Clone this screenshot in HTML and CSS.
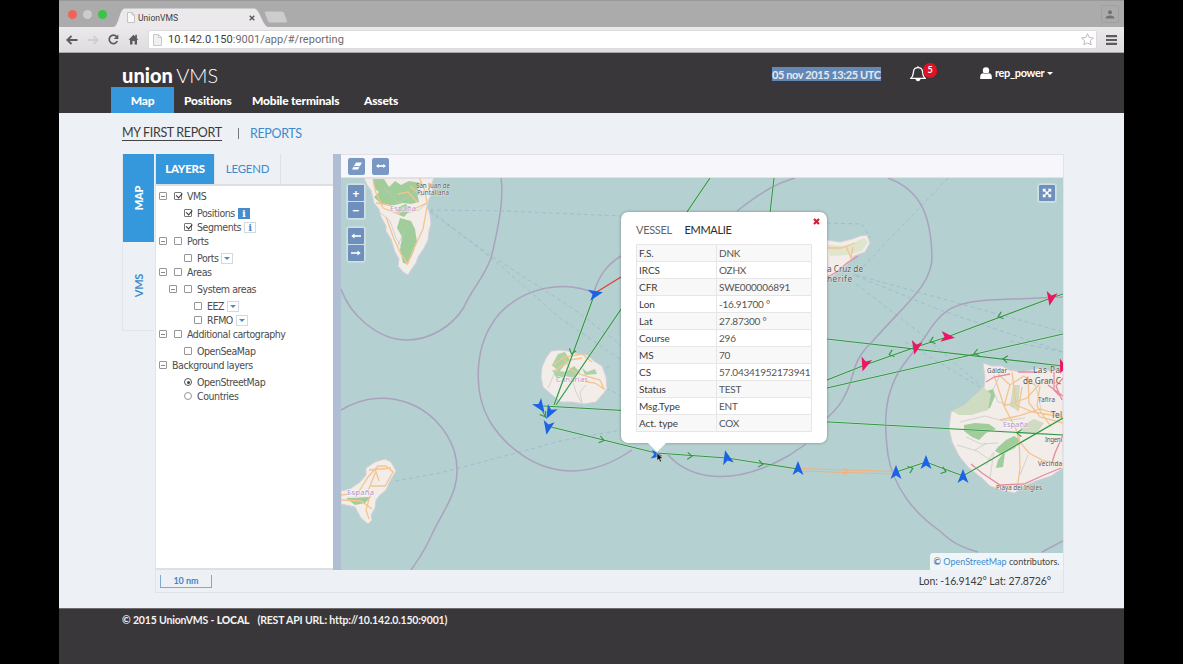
FILE: index.html
```html
<!DOCTYPE html>
<html lang="en">
<head>
<meta charset="utf-8">
<title>UnionVMS</title>
<link rel="stylesheet" href="styles.css">
</head>
<body>
<div class="window">
  <div class="tabstrip">
    <div class="lights"><i class="red"></i><i class="grey"></i><i class="green"></i></div>
    <div class="tab">
      <svg class="tab-shape" width="154" height="19" viewBox="0 0 154 19"><path d="M0 19 C5 17 5 3 10 .5 H140 C146 1 148 17 154 19Z" fill="#ebe9eb"/></svg>
      <svg class="page-icon" width="8" height="11" viewBox="0 0 8 11"><path d="M.5.5h4.5l2.500 2.500v7.500h-7z M5 .5v2.500h2.500" fill="#f8f8f8" stroke="#c4c4c4"/></svg>
      <span class="tab-title">UnionVMS</span>
      <svg class="tab-close" width="6" height="6" viewBox="0 0 6 6"><path d="M.7.7l4.600 4.600M5.300.7L.7 5.300" stroke="#555" stroke-width="1.300"/></svg>
    </div>
    <svg class="newtab" width="24" height="12" viewBox="0 0 24 12"><path d="M1.500.5h16.500q1.500 0 2 1.500l3 8q.3 1.500-1 1.500H6q-1.500 0-2-1.500L.8 2Q.5.500 1.500.500z" fill="#cdcdcd" stroke="#bbb" stroke-width=".6"/></svg>
    <div class="profile"><svg width="10" height="9" viewBox="0 0 10 9"><circle cx="5" cy="2.300" r="2" fill="#727272"/><path d="M.5 8.500Q.800 5.800 5 5.600 9.200 5.800 9.500 8.500z" fill="#727272"/></svg></div>
  </div>
  <div class="toolbar">
    <svg width="12" height="10" viewBox="0 0 12 10"><path d="M11.500 5H1.500M5.500 1L1.300 5l4.200 4" fill="none" stroke="#5c5c5c" stroke-width="1.800"/></svg>
    <svg width="12" height="10" viewBox="0 0 12 10"><path d="M.5 5h10M6.500 1l4.200 4-4.200 4" fill="none" stroke="#cfcfcf" stroke-width="1.800"/></svg>
    <svg width="11" height="11" viewBox="0 0 11 11"><path d="M9.300 7A4.200 4.200 0 1 1 8.600 2.600" fill="none" stroke="#5c5c5c" stroke-width="1.700"/><path d="M10.300.5v4.500H5.800z" fill="#5c5c5c"/></svg>
    <svg width="11" height="11" viewBox="0 0 11 11"><path d="M.5 5.800L5.500.800l1.800 1.800V.8h1.600v3.400l1.600 1.600H9V10.500H6.600V7H4.500v3.500H2V5.800z" fill="#5c5c5c"/></svg>
    <div class="address">
      <svg width="9" height="12" viewBox="0 0 9 12"><path d="M.5.5h5l3 3v8h-8z M5.500.5v3h3" fill="#f1f1f1" stroke="#c9c9c9"/></svg>
      <span class="url"><b>10.142.0.150</b>:9001/app/#/reporting</span>
      <svg class="star" width="13" height="13" viewBox="0 0 14 14"><path d="M7 .8l1.900 4 4.400.600-3.200 3 .8 4.400L7 10.700l-3.900 2.100.8-4.400-3.200-3 4.400-.6z" fill="#fff" stroke="#b3b3b3"/></svg>
    </div>
    <svg class="burger" width="11" height="10" viewBox="0 0 11 10"><path d="M0 1.200h11M0 5h11M0 8.800h11" stroke="#5c5c5c" stroke-width="2.200"/></svg>
  </div>

  <header class="header">
    <div class="topline">
      <div class="brand"><b>union</b> <span>VMS</span></div>
      <div class="clock"><span>05 nov 2015 13:25 UTC</span></div>
      <div class="alerts">
        <svg width="16" height="17" viewBox="0 0 16 17"><path d="M1 13.300C3.500 11 3.200 8.500 3.500 6.500 3.800 4 5.500 2.600 8 2.600S12.200 4 12.500 6.500c.300 2 0 4.500 2.500 6.800z" fill="none" stroke="#fff" stroke-width="1.300"/><path d="M8 2.600V1M6 14a2 1.800 0 0 0 4 0z" fill="#fff" stroke="#fff"/></svg>
        <span class="count">5</span>
      </div>
      <div class="user">
        <svg width="12" height="12" viewBox="0 0 12 12"><circle cx="6" cy="3.400" r="3.200" fill="#fff"/><path d="M.2 12V9.500Q.4 6.300 3.300 6.200 6 8 8.700 6.200 11.600 6.300 11.800 9.500V12z" fill="#fff"/></svg>
        <span>rep_power</span><i class="caret"></i>
      </div>
    </div>
    <nav class="nav"><a class="active">Map</a><a class="n2">Positions</a><a class="n3">Mobile terminals</a><a class="n4">Assets</a></nav>
  </header>

  <main class="content">
    <div class="crumbs"><a class="current">MY FIRST REPORT</a><i></i><a class="reports">REPORTS</a></div>
    <div class="workspace">
      <div class="side-tabs"><div class="side active"><span>MAP</span></div><div class="side"><span>VMS</span></div></div>
      <div class="frame">
        <div class="panes">
          <aside class="layers">
            <div class="layer-tabs"><a class="active">LAYERS</a><a>LEGEND</a></div>
            <div class="tree">
              <ul>
                <li><div class="row"><i class="exp"></i><i class="box on"></i>VMS</div>
                  <ul><li><div class="row"><i class="box on"></i>Positions<em class="info sel"></em></div></li>
                      <li><div class="row"><i class="box on"></i>Segments<em class="info"></em></div></li></ul></li>
                <li><div class="row"><i class="exp"></i><i class="box"></i>Ports</div>
                  <ul><li><div class="row"><i class="box"></i>Ports<em class="drop"></em></div></li></ul></li>
                <li><div class="row"><i class="exp"></i><i class="box"></i>Areas</div>
                  <ul><li class="branch"><div class="row"><i class="exp"></i><i class="box"></i>System areas</div>
                    <ul><li><div class="row"><i class="box"></i>EEZ<em class="drop"></em></div></li>
                        <li><div class="row"><i class="box"></i>RFMO<em class="drop"></em></div></li></ul></li></ul></li>
                <li><div class="row"><i class="exp"></i><i class="box"></i>Additional cartography</div>
                  <ul><li><div class="row"><i class="box"></i>OpenSeaMap</div></li></ul></li>
                <li><div class="row"><i class="exp"></i>Background layers</div>
                  <ul><li><div class="row"><i class="radio on"></i>OpenStreetMap</div></li>
                      <li><div class="row"><i class="radio"></i>Countries</div></li></ul></li>
              </ul>
            </div>
          </aside>
          <div class="splitter"></div>
          <section class="map-side">
            <div class="map-tools">
              <button><svg width="12" height="10" viewBox="0 0 12 10"><path d="M5 1.500H11L7 8.500H1z" fill="#fff"/><path d="M2.500 5.600h6.300" stroke="#7a98c4" stroke-width="1"/></svg></button>
              <button><svg width="12" height="8" viewBox="0 0 12 8"><path d="M2 4h8" stroke="#fff" stroke-width="1.700"/><path d="M3.800 2v4L1 4zM8.200 2v4L11 4z" fill="#fff"/></svg></button>
            </div>
            <div class="map">
<svg class="chart" width="722" height="392" viewBox="341 178 722 392">
  <defs>
    <path id="ship" d="M0-8L5.500 6 0 2.500-5.500 6z"/>
    <path id="tick" d="M-2.500-3.500L2 0l-4.500 3.500" fill="none"/>
  </defs>
  <rect x="341" y="178" width="722" height="392" fill="#b5d0d0"/>
  <!-- ferry routes -->
  <g class="ferry">
    <path d="M430 210L505 211 621 216M430 210L500 265 560 318 621 360M430 212L490 255 575 310 621 345M395 481L440 473 520 452 560 441 621 430M606 388L621 396M827 223L862 224 870 238M948 178L877 252 850 280M856 275L1063 332M856 276L940 310 1063 352M856 284L925 337 980 385M600 372L612 365M905 342L945 366 985 390M1010 341L1063 352"/>
  </g>
  <!-- islands -->
  <g class="land">
    <path d="M364 178L367 185 371 190 374 203 379 209 381 217 386 226 386 231 391 239 395 252 399 259 398 266 403 272 408 275 411 270 416 263 418 257 424 248 428 240 429 231 431 224 430 215 427 206 429 199 433 191 431 185 434 178z"/>
    <path d="M341 491L350 489 360 482 366 475 366 468 375 462 385 459 391 462 396 471 390 481 386 490 380 495 376 500 375 508 371 515 372 520 368 524 361 518 355 507 341 504z"/>
    <path d="M542 367L546 358 551 351 560 350 568 351 578 354 587 355 594 361 602 366 606 377 607 389 602 395 596 402 584 404 572 402 561 402 552 395 543 387 541 377z"/>
    <path d="M827 240L840 242 852 239 860 236 867 235 870 243 865 252 854 256 846 266 836 274 827 279z"/>
    <path d="M983 363L992 366 1002 366 1009 370 1022 372 1040 368 1050 371 1063 370V468L1051 476 1036 481 1024 486 1015 493 1004 491 990 486 983 479 969 468 959 456 952 442 949 428 951 412 963 407 973 397 984 388 985 377z"/>
  </g>
  <g class="forest">
    <path d="M373 179h11l5 8 6-6 6 4 8-4 12 2-4 9 2 10-8 2-8-1-12 3-10-2-7-7 5-5-5-4z" />
    <path d="M398 207l8-3 4 6-6 7-7-3zM400 218l11 3 4 8 2 13-4 11-5 11-5-1-3-13 2-13-5-9z"/>
    <path d="M346 498l25-1-6 6-10 2z"/>
    <path d="M552 365l6-11 7-2 5 8-7 7-4 5zM552 370l14 2 8-6 6 6-6 6-9-2-8 3zM582 368l5 4 8-3 2 5-12 1z" opacity=".85"/>
    <path d="M978 401l6-9 9-3 2 7-5 12-9 3zM964 425l11-2 14 1 7 5-10 4-7 7-7-3-8-6zM998 447l8-7 8-4 6 4-5 8-10 5-2 14-7 1 2-8 4-5-7-4z"/>
  </g>
  <path d="M952 411l12-6 12-10 7-8 8 7-3 16-17 5-12 0zM1013 385h7l-2 26-8-5zM1020 427l14-8 10 4-8 11-14-1z" fill="#cfdcc2"/>
  <path d="M828 245l18 1 18-8 4 4-6 9-14 4-18 1z" fill="#dfe6cd"/>
  <path d="M1036 387l5 22M960 422l25-6 18 5 22-3M966 437l15 7 17-1M975 450l12-7M957 445l20 6 15 10M986 465l7-12M1028 455l-8 20M990 477l4-25M571 376l5 16 5 10M556 370l-8 18M586 385l-6 7 2 12M381 213l9 8 6 17 6 10M384 188l14 15 13-8 10-9M407 213l12-3 8-7M405 230l-8 17M1000 375l-7 15 5 12 15 4" class="track"/>
  <g class="road">
    <path d="M373 180l3 13 7 15 13 5 18-4 13-6-2-12-6-14M386 217l8 22 8 17 6 8M427 207l-4 22-9 19-7 17M398 194l10-2 9 10M376 203l13 2M422 196l-12-10"/>
    <path d="M341 495l17-2 10-16 10-11 8 0 7 6-8 14-14 0M375 469l4 12M369 470l22-2M371 492l-5 18 3 9M376 471l-8 20M341 500l20 1 11 8"/>
    <path d="M552 366l12-9 18-3 10 8M564 359l7 11 11 5 18 5 4 9-9-6-14-2M553 372l8-6 9-6 12-2"/>
    <path d="M828 248l13 0 14-5M846 246l5 12 2-11"/>
    <path d="M998 374l12 11-6 21M1010 385l14-9 12 10M1004 406l23-8 16-18 18 4M1012 372l4 33 17 7 30 5M1004 406l12 23 3 12 10 12 15 8 19 3M1019 436l1 32-3 22M1000 420l18-4 22-7 20 6M1028 376l1 27 11 14 23 6M994 375l10 31M1022 387l-4 24M1040 386l-3 20 14 21"/>
  </g>
  <path d="M971 464l11 9 18 12 24-1 20-9 17-7M1063 435l-8 18-3 10M1054 372v18l7 7M1048 385l15 11M1063 378l-7 8 6 14M1018 372h22M986 382l8-5 16-3" class="motorway"/>
  <path d="M827 277l10-5 10-9 11-7" class="motorway"/>
  <!-- territorial waters -->
  <g class="waters">
    <path d="M501 178C504 196 499 226 491 258C484 278 471 290 464 307C452 327 429 340 407 340C378 340 350 315 341 289"/>
    <path d="M597 294C565 279 525 287 500 313C472 345 474 393 489 420C505 447 536 471 572 471C596 471 616 461 632 450"/>
    <path d="M341 410C386 383 438 405 454 450C465 487 444 508 433 532C425 551 418 560 411 570"/>
    <path d="M594 292C600 272 610 263 621 256M668 455C693 482 737 485 788 456L806 444M737 211C755 197 773 184 795 178M888 178C923 191 931 219 932 257C932 285 905 304 872 342C850 362 855 379 845 395C840 407 832 413 827 418"/>
    <path d="M1063 297L990 300C951 302 940 312 925 337L907 360C882 391 884 425 888 455C893 487 915 514 940 531C953 544 964 548 978 552M1042 552L1063 541"/>
  </g>
  <g class="place">
    <text x="416" y="188" textLength="34">San Juan de</text><text x="417" y="195" textLength="32">Puntallana</text>
    <text x="827" y="272" textLength="36" class="city">a Cruz de</text><text x="827" y="282" textLength="25" class="city">nerife</text>
    <text x="987" y="373" textLength="20">Gáldar</text><text x="1033" y="373" textLength="27" class="city">Las Pa</text><text x="1023" y="384" textLength="38" class="city">de Gran C</text>
    <text x="1038" y="402" textLength="17">Tafira</text><text x="1051" y="418" textLength="11" class="city">Tel</text><text x="1045" y="442" textLength="17">Ingeni</text><text x="1038" y="466" textLength="24">Vecinda</text>
    <text x="996" y="490" textLength="46">Playa del Inglés</text>
  </g>
  <g class="country"><text x="390" y="211" textLength="26">España</text><text x="347" y="495" textLength="27">España</text><text x="556" y="382" textLength="32">Canarias</text><text x="1003" y="427" textLength="25">España</text></g>
  <!-- vessel tracks -->
  <g class="halo"><path d="M710 178L556 405M774 178L770 213M595 293L554 405M543 406L1063 435M547 426L656 453 727 458 798 469M896 472L926 462 963 476 1063 418M827 339L1063 366M827 380L865 365 916 347 947 337 1051 298 1063 294M827 388L1063 334M540 406l6 12"/></g>
  <g class="track-line"><path d="M710 178L556 405M774 178L770 213M595 293L554 405M543 406L1063 435M547 426L656 453 727 458 798 469M896 472L926 462 963 476 1063 418M827 339L1063 366M827 380L865 365 916 347 947 337 1051 298 1063 294M827 388L1063 334M540 406l6 12"/>
    <use href="#tick" transform="translate(572 352) rotate(108)"/><use href="#tick" transform="translate(544 415) rotate(60)"/><use href="#tick" transform="translate(602 440) rotate(14)"/><use href="#tick" transform="translate(690 456) rotate(4)"/><use href="#tick" transform="translate(761 464) rotate(8)"/><use href="#tick" transform="translate(911 469) rotate(-20)"/><use href="#tick" transform="translate(944 471) rotate(20)"/><use href="#tick" transform="translate(1000 316) rotate(160)"/><use href="#tick" transform="translate(932 341) rotate(160)"/><use href="#tick" transform="translate(891 354) rotate(160)"/><use href="#tick" transform="translate(976 353) rotate(167)"/><use href="#tick" transform="translate(1005 359) rotate(187)"/><use href="#tick" transform="translate(1019 433) rotate(183)"/>
  </g>
  <path d="M595 293L621 277" stroke="#e03a3a" stroke-width="1.200"/>
  <g fill="none" stroke="#f0b080" stroke-width="1.200"><path d="M798 468.500L896 471.500M798 471L896 474"/><use href="#tick" transform="translate(846 471.500)"/></g>
  <g fill="#1a63e6">
    <use href="#ship" transform="translate(595 294) rotate(78)"/><use href="#ship" transform="translate(540 406) rotate(145)"/><use href="#ship" transform="translate(550 412) rotate(208)"/><use href="#ship" transform="translate(548 427) rotate(191)"/><use href="#ship" transform="translate(656 455) rotate(100) scale(.8)"/><use href="#ship" transform="translate(727 458) rotate(-14)"/><use href="#ship" transform="translate(798 469)"/><use href="#ship" transform="translate(896 473)"/><use href="#ship" transform="translate(926 463)"/><use href="#ship" transform="translate(963 477)"/>
  </g>
  <g fill="#ec1763">
    <use href="#ship" transform="translate(1051 298) rotate(191)"/><use href="#ship" transform="translate(947 337) rotate(96)"/><use href="#ship" transform="translate(916 347) rotate(192)"/><use href="#ship" transform="translate(865 364) rotate(198)"/><use href="#ship" transform="translate(1063 366) rotate(200)"/>
  </g>
</svg>
              <div class="zoom-ctl"><button>+</button><button>−</button></div>
              <div class="hist-ctl">
                <button><svg width="10" height="6" viewBox="0 0 10 6"><path d="M2 3h8" stroke="#fff" stroke-width="1.600"/><path d="M3.500.5v5L.3 3z" fill="#fff"/></svg></button>
                <button><svg width="10" height="6" viewBox="0 0 10 6"><path d="M0 3h8" stroke="#fff" stroke-width="1.600"/><path d="M6.500.5v5L9.700 3z" fill="#fff"/></svg></button>
              </div>
              <div class="full-ctl"><button><svg width="10" height="10" viewBox="0 0 10 10"><path d="M2 2l6 6M8 2L2 8" stroke="#fff" stroke-width="1.500"/><path d="M.8.8h3.500L.8 4.300zM9.200.8v3.500L5.700 .8zM.8 9.200V5.700L4.300 9.200zM9.200 9.200H5.700L9.200 5.700z" fill="#fff"/></svg></button></div>
              <div class="attribution">© <a>OpenStreetMap</a> contributors.</div>
              <div class="popup">
                <svg class="popup-close" width="7" height="7" viewBox="0 0 7 7"><path d="M1 1l5 5M6 1L1 6" stroke="#cf1f38" stroke-width="2.200"/></svg>
                <h3><span>VESSEL</span> EMMALIE</h3>
                <table>
                  <tr><th>F.S.</th><td>DNK</td></tr><tr><th>IRCS</th><td>OZHX</td></tr><tr><th>CFR</th><td>SWE000006891</td></tr><tr><th>Lon</th><td>-16.91700 °</td></tr><tr><th>Lat</th><td>27.87300 °</td></tr><tr><th>Course</th><td>296</td></tr><tr><th>MS</th><td>70</td></tr><tr><th>CS</th><td>57.04341952173941</td></tr><tr><th>Status</th><td>TEST</td></tr><tr><th>Msg.Type</th><td>ENT</td></tr><tr><th>Act. type</th><td>COX</td></tr>
                </table>
              </div>
              <svg class="cursor" width="8" height="11" viewBox="0 0 8 11"><path d="M1 .8v7.800l1.800-1.600 1.200 3 1.500-.6-1.200-2.900h2.500z" fill="#111" stroke="#ddd" stroke-width=".6"/></svg>
            </div>
          </section>
        </div>
        <div class="statusbar"><div class="scale">10 nm</div><div class="coords">Lon: -16.9142° Lat: 27.8726°</div></div>
      </div>
    </div>
  </main>
  <footer class="footer">© 2015 UnionVMS - <b>LOCAL</b><span>(REST API URL: http://10.142.0.150:9001)</span></footer>
</div>
</body>
</html>
```
FILE: styles.css
```css
* { box-sizing: border-box; }
body { margin: 0; background: #000; font-family: Lato, "Liberation Sans", sans-serif; font-size: 11px; color: #3b3b3b; white-space: nowrap; }
svg { display: block; flex: none; }
button { border: 0; padding: 0; font: inherit; color: #fff; display: flex; align-items: center; justify-content: center; background: #7392bf; }
i, em { font-style: normal; }
.window { width: 1065px; height: 664px; margin: 0 auto; display: flex; flex-direction: column; overflow: hidden; background: #edf1f5; }

/* browser chrome */
.tabstrip { height: 27px; background: #ababab; border-top: 1px solid #999; display: flex; align-items: flex-end; padding: 0 8px 0 9px; }
.lights { display: flex; gap: 6px; align-self: center; width: 46px; }
.lights i { width: 9px; height: 9px; border-radius: 50%; }
.lights .red { background: #f2625c; }
.lights .grey { background: #cfcbcb; }
.lights .green { background: #3cc34a; }
.tab { width: 154px; height: 19px; position: relative; display: flex; align-items: center; padding: 0 13px 0 13px; }
.tab-shape { position: absolute; left: 0; top: 0; }
.page-icon, .tab-title, .tab-close { position: relative; }
.tab-title { flex: 1; margin-left: 3px; font: 8.600px Roboto, sans-serif; color: #3e3e3e; }
.newtab { margin: 0 0 4px -4px; }
.profile { width: 18px; height: 18px; margin: 0 -3px 4px auto; border: 1px solid #a0a0a0; border-radius: 2px; display: flex; align-items: center; justify-content: center; }
.toolbar { height: 26px; background: linear-gradient(#ebe9eb, #dedcde); border-bottom: 1px solid #a6a4a6; display: flex; align-items: center; gap: 9px; padding: 0 7px; }
.address { flex: 1; height: 19px; margin-left: 0; background: #fff; border: 1px solid #dcdadc; border-radius: 2px; display: flex; align-items: center; padding: 0 2px 0 4px; }
.url { margin-left: 6px; flex: 1; font: 11px Roboto, sans-serif; letter-spacing: .03px; color: #6d6d6d; }
.url b { font-weight: 400; color: #3d3d3d; }

/* application header */
.header { height: 60px; background: #3a373a; color: #fff; display: flex; flex-direction: column; }
.topline { height: 34px; display: flex; align-items: flex-start; padding-left: 63px; }
.brand { width: 650px; font-size: 20px; line-height: 24px; padding-top: 10px; letter-spacing: 0; }
.brand b { font-weight: 900; letter-spacing: .05px; }
.brand span { font-weight: 300; margin-left: -2px; }
.clock { width: 138px; padding-top: 14px; line-height: 15px; font-weight: 700; letter-spacing: -.4px; }
.clock span { display: inline-block; background: #6488b5; color: #e3eaf3; height: 14px; line-height: 15px; }
.alerts { width: 70px; padding-top: 12px; position: relative; }
.count { position: absolute; left: 13px; top: 10px; width: 14px; height: 15px; border-radius: 7px; background: #e01228; font-size: 9px; line-height: 14px; font-weight: 700; text-align: center; }
.user { display: flex; align-items: center; padding-top: 13px; gap: 3px; font-weight: 700; letter-spacing: -.35px; line-height: 14px; }
.caret { border: 3px solid transparent; border-top-color: #fff; border-bottom: 0; }
.nav { height: 26px; padding-left: 52px; display: flex; font-size: 12px; line-height: 27px; font-weight: 900; letter-spacing: -.2px; }
.nav a.active { width: 63px; text-align: center; background: #3597dc; }
.n2 { margin-left: 10px; width: 68px; }
.n3 { width: 112px; }

/* workspace */
.content { height: 495px; padding: 0 60px 0 63px; }
.crumbs { height: 41px; display: flex; align-items: center; font-size: 12.500px; line-height: 14px; letter-spacing: -.35px; }
.crumbs .current { border-bottom: 1px solid #444; width: 100px; }
.crumbs i { width: 1px; height: 11px; margin: 0 11px 0 16px; background: #777; }
.reports { color: #4089cd; }
.workspace { display: flex; }
.side-tabs { width: 32px; height: 177px; border: 1px solid #e2e6eb; border-width: 0 0 1px 1px; margin-right: 1px; }
.side { height: 88px; display: flex; align-items: center; justify-content: center; color: #4089cd; }
.side span { writing-mode: vertical-rl; transform: rotate(180deg); font-size: 11px; font-weight: 700; letter-spacing: -.3px; }
.side.active { background: #3597dc; color: #fff; }
.side.active span { font-weight: 900; }
.frame { flex: 1; height: 439px; border: 1px solid #e0e4ea; border-width: 0 1px 1px; }
.panes { display: flex; height: 416px; }
.layers { width: 177px; display: flex; flex-direction: column; }
.layer-tabs { height: 32px; display: flex; border-bottom: 2px solid #dbe0e5; }
.layer-tabs a { width: 66px; font-size: 11.400px; line-height: 30px; text-align: center; color: #4089cd; border-right: 1px solid #dde2e8; letter-spacing: -.2px; }
.layer-tabs a.active { width: 59px; height: 30px; background: #3597dc; color: #fff; font-weight: 900; }
.tree { flex: 1; background: #fff; border-bottom: 2px solid #dcdfe3; padding: 3px 0 0 3px; font: 10.500px/14px "DejaVu Sans Condensed", "DejaVu Sans", sans-serif; font-stretch: condensed; color: #4c4c4c; letter-spacing: -.43px; }
.tree ul { list-style: none; margin: 0; padding: 0; }
.tree ul ul { padding: 3px 0 0 25px; }
.tree .branch { margin-left: -15px; }
.tree .branch ul { padding-left: 25px; }
.row { height: 14px; display: flex; align-items: center; }
.exp, .box, .radio { flex: none; width: 8px; height: 8px; border: 1px solid #969696; border-radius: 1px; position: relative; }
.exp { margin-right: 5px; }
.exp + .box { margin-left: 2px; }
.exp::after { content: ""; position: absolute; left: 1px; right: 1px; top: 2.500px; height: 1px; background: #888; }
.box { margin-right: 5px; }
.box.on { border-color: #777; }
.box.on::after { content: ""; position: absolute; left: 1px; top: 0; width: 5px; height: 2.500px; border: solid #333; border-width: 0 0 1.500px 1.500px; transform: rotate(-48deg); }
.radio { border-radius: 50%; margin-right: 5px; }
.radio.on { border-color: #555; }
.radio.on::after { content: ""; position: absolute; inset: 1.500px; border-radius: 50%; background: #444; }
.info, .drop { flex: none; width: 12px; height: 11px; margin-left: 3px; border: 1px solid #d2d9e1; position: relative; }
.info::before { content: "i"; position: absolute; inset: 0; font: 700 10px/9px "DejaVu Serif", serif; text-align: center; color: #4a8bca; }
.info.sel { background: #468ccb; border-color: #468ccb; }
.info.sel::before { color: #fff; }
.drop::before { content: ""; position: absolute; left: 2px; top: 3px; border: 3px solid transparent; border-top-color: #4a8bca; border-bottom: 0; }
.splitter { width: 8px; background: #afbed3; }
.map-side { flex: 1; }
.map-tools { height: 24px; background: #f7f6fa; border: solid #e1e2e8; border-width: 1px 0; display: flex; gap: 7px; align-items: center; padding: 0 7px; }
.map-tools button { width: 17px; height: 17px; border-radius: 2px; background: #7a98c4; }

/* map */
.map { position: relative; height: 392px; overflow: hidden; }
.ferry { fill: none; stroke: #98b9d0; stroke-width: 1; stroke-dasharray: 4 3; opacity: .8; }
.land { fill: #f2ede9; stroke: #d5cfd8; stroke-width: 1; }
.forest { fill: #a0cd99; }
.road { fill: none; stroke: #f5c48e; stroke-width: 1.300; }
.track { fill: none; stroke: #c7c5c3; stroke-width: .7; }
.motorway { fill: none; stroke: #e68aa0; stroke-width: 1.300; }
.waters { fill: none; stroke: #a89bbd; stroke-width: 1.500; opacity: .85; }
.place { font: 6.300px "Noto Sans", sans-serif; fill: #555; paint-order: stroke; stroke: #f5f1ee; stroke-width: .6px; }
.city { font-size: 8.200px; }
.country { font: 7.600px "Noto Sans", sans-serif; fill: #b28bc0; paint-order: stroke; stroke: #fff; stroke-width: .8px; }
.halo { fill: none; stroke: #d2ecd2; stroke-width: 2.200; opacity: .6; }
.track-line { fill: none; stroke: #339348; stroke-width: 1.100; }
.zoom-ctl, .hist-ctl, .full-ctl { position: absolute; left: 6px; display: flex; flex-direction: column; gap: 1px; padding: 1px; background: #cfdfe8; border-radius: 3px; box-shadow: 0 0 0 1px #c6dce1; }
.zoom-ctl { top: 6px; }
.hist-ctl { top: 49px; }
.full-ctl { top: 6px; left: auto; right: 7px; }
.zoom-ctl button, .hist-ctl button, .full-ctl button { width: 16px; height: 16px; border-radius: 1px; font: 700 12px/15px "Open Sans", sans-serif; background: #6f8fbc; }
.attribution { position: absolute; right: 0; bottom: 0; width: 133px; height: 17px; background: #f0f5f7; font-size: 9px; line-height: 17px; text-align: center; color: #444; border-radius: 3px 0 0; }
.attribution a { color: #3f8bd0; }
.popup { position: absolute; left: 280px; top: 34px; width: 206px; height: 231px; background: #fff; border-radius: 7px; box-shadow: 0 0 3px rgba(0, 0, 0, .35); padding: 11px 15px; }
.popup::after { content: ""; position: absolute; left: 27px; bottom: -9px; border: 9px solid transparent; border-top-color: #fff; border-bottom: 0; }
.popup-close { position: absolute; right: 7px; top: 6px; }
.popup h3 { margin: 0; font-size: 11px; line-height: 14px; font-weight: 400; letter-spacing: -.3px; color: #2c2c2c; }
.popup h3 span { color: #666; margin-right: 10px; }
.popup table { margin-top: 7px; width: 176px; border-collapse: collapse; table-layout: fixed; }
.popup th, .popup td { height: 17px; border: 1px solid #e6e6e6; padding: 0 2px; font-size: 10px; line-height: 16px; text-align: left; font-weight: 400; letter-spacing: -.22px; color: #555; }
.popup th { width: 80px; color: #3c3c3c; letter-spacing: -.05px; }
.popup tr:nth-child(odd) { background: #f8f8f8; }
.cursor { position: absolute; left: 315px; top: 274px; }
.statusbar { height: 22px; display: flex; justify-content: space-between; }
.scale { margin: 5px 0 0 4px; width: 52px; height: 13px; border: 1px solid #7fa9d2; border-top: 0; font-size: 9px; line-height: 12px; text-align: center; color: #4386c6; font-weight: 700; }
.coords { padding-right: 12px; font-size: 10.500px; line-height: 22px; letter-spacing: -.1px; color: #3d3d3d; }
.footer { height: 56px; border-top: 1px solid #6e6c6e; background: #3a373a; color: #f2f2f2; padding: 4px 63px; font-size: 10.500px; line-height: 15px; font-weight: 700; letter-spacing: -.16px; }
.footer b { font-weight: 900; }
.footer span { margin-left: 8px; }
```
